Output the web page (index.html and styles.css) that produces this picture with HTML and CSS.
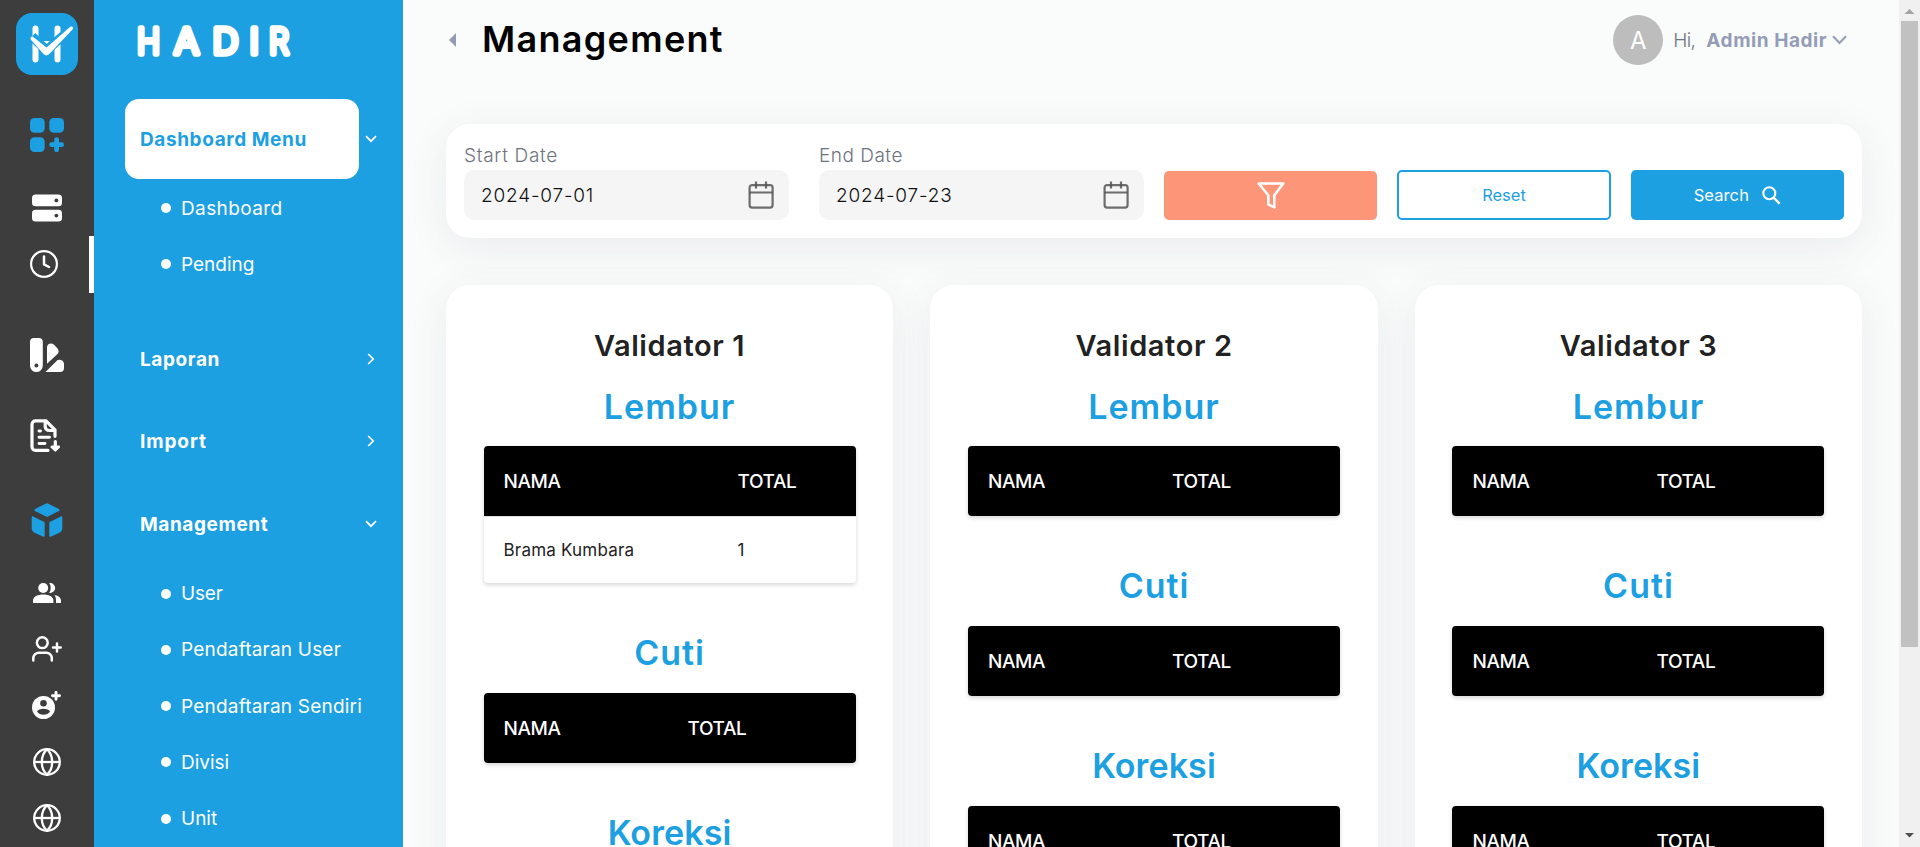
FILE: index.html
```html
<!DOCTYPE html>
<html lang="id">
<head>
<meta charset="utf-8">
<title>Hadir - Management</title>
<link rel="stylesheet" href="styles.css">
</head>
<body>
<svg class="defs" aria-hidden="true">
  <symbol id="i-down" viewBox="0 0 12 8"><path d="M1 1.2l5 5 5-5" fill="none" stroke="currentColor" stroke-width="1.7"/></symbol>
  <symbol id="i-right" viewBox="0 0 8 12"><path d="M1.2 1l5 5-5 5" fill="none" stroke="currentColor" stroke-width="1.7"/></symbol>
  <symbol id="i-globe" viewBox="0 0 28 28"><g fill="none" stroke="currentColor" stroke-width="2.3"><circle cx="14" cy="14" r="12.8"/><path d="M1.2 14h25.600"/><path d="M14 1.200c-3.800 3.600-5.200 8-5.200 12.800s1.400 9.200 5.200 12.800c3.800-3.600 5.200-8 5.200-12.800S17.800 4.800 14 1.200z"/></g></symbol>
  <symbol id="i-cal" viewBox="0 0 26 28"><g fill="none" stroke="#555" stroke-opacity=".85" stroke-width="2.2"><rect x="1.600" y="4.100" width="23" height="22.500" rx="2.500"/><path d="M1.600 11.500h23M8 .5v7M18 .5v7"/></g></symbol>
</svg>
<div class="app">
  <nav class="rail">
    <div class="rail-logo">
      <svg width="62" height="62" viewBox="0 0 62 62"><rect width="62" height="62" rx="16" fill="#1ca0e2"/>
        <g stroke="#fff" stroke-width="6" stroke-linecap="round"><path d="M19.500 15.500v31M41.500 15.500v31"/></g>
        <path d="M24 30h13" stroke="#fff" stroke-width="4"/>
        <path d="M16 23.500l14.500 13.800L55 16" fill="none" stroke="#1ca0e2" stroke-width="9.500"/>
        <path d="M14.700 26.600c-.8-2.200.9-4 2.900-2.400L30.500 34.500 54 14c2.300-1.500 4 .6 2.500 2.600L33.300 41c-2 2-4 1.900-5.800 0z" fill="#fff"/>
      </svg>
    </div>
    <div class="rail-item tall">
      <svg width="34" height="34" viewBox="0 0 34 34" fill="#1ca0e2"><rect width="14.700" height="14.700" rx="4.500"/><rect x="19.300" width="14.700" height="14.700" rx="4.500"/><rect y="19.300" width="14.700" height="14.700" rx="4.500"/><path d="M26.600 21.700v10M21.600 26.700h10" stroke="#1ca0e2" stroke-width="4.800" stroke-linecap="round"/></svg>
    </div>
    <div class="rail-item">
      <svg width="30" height="28" viewBox="0 0 30 28"><rect y=".5" width="30" height="11.700" rx="3.500" fill="#fff"/><rect y="15.800" width="30" height="11.700" rx="3.500" fill="#fff"/><circle cx="24.400" cy="6.400" r="1.900" fill="#3d3d3d"/><circle cx="24.400" cy="21.600" r="1.900" fill="#3d3d3d"/></svg>
    </div>
    <div class="rail-item current">
      <svg width="28" height="28" viewBox="0 0 28 28" fill="none" stroke="#fff"><circle cx="14" cy="14" r="12.900" stroke-width="2.200"/><path d="M14 6.500v7.800l5 2.700" stroke-width="2.500" stroke-linecap="round" stroke-linejoin="round"/></svg>
    </div>
    <div class="rail-item swatch">
      <svg width="34" height="34" viewBox="0 0 34 34" fill="#fff"><path fill-rule="evenodd" d="M4 0h4.800a4 4 0 0 1 4 4v23.600a6.400 6.400 0 0 1-12.800 0V4a4 4 0 0 1 4-4zm2.400 25.600a2 2 0 1 0 0 4 2 2 0 0 0 0-4z"/><path d="M17 9.200c0-3.400 4.200-5 6.800-2.600l3.300 3.300c2 2 2 4.300.4 6L17 25.700z"/><path d="M15.500 34L27.300 22.200c1.200-1.200 6.700-.8 6.700 4V30a4 4 0 0 1-4 4z"/></svg>
    </div>
    <div class="rail-item doc">
      <svg width="30" height="33" viewBox="0 0 30 33" fill="none" stroke="#fff" stroke-width="3.200"><path d="M18 31.300H5.500a3.500 3.500 0 0 1-3.500-3.500V5.300a3.500 3.500 0 0 1 3.500-3.500H16l9 9v6.500M15.200 2v5.500a4 4 0 0 0 4 4H25" stroke-linecap="round"/><path d="M9 12h1.500M9 18.300h10.500M9 24.500h6" stroke-width="2.900" stroke-linecap="round"/><path d="M25.300 22.500v5" stroke-linecap="round"/><path d="M21.700 27.800h7.200l-3.600 3.600z" fill="#fff" stroke-width="2.400" stroke-linejoin="round"/></svg>
    </div>
    <div class="rail-item cube">
      <svg width="32" height="34" viewBox="0 0 32 34" fill="#1ca0e2" stroke="#1ca0e2" stroke-width="2" stroke-linejoin="round"><path d="M16 1.200L27.500 7 16 12.800 4.500 7z"/><path d="M1.700 14.300l11 5.500v13L4 28.900c-1.800-.9-2.300-1.700-2.300-3.400z"/><path d="M30.300 14.300l-11 5.500v13l8.700-3.900c1.800-.9 2.300-1.700 2.300-3.400z"/></svg>
    </div>
    <div class="rail-item">
      <svg width="28" height="20" viewBox="0 0 28 20" fill="#fff"><circle cx="10.200" cy="5" r="5"/><path d="M0 20v-2.500c0-4 5-6 10.200-6s10.200 2 10.200 6V20z"/><path d="M16.200.1a5 5 0 1 1 0 9.800c2-2.900 2-6.900 0-9.800zM21.500 12c4.300.9 6.500 2.900 6.500 5.500V20h-5v-2.500c0-2.300-.4-4-1.500-5.500z"/></svg>
    </div>
    <div class="rail-item">
      <svg width="30" height="26" viewBox="0 0 30 26" fill="none" stroke="#fff" stroke-width="2.500" stroke-linecap="round"><circle cx="10.300" cy="6.700" r="5.400"/><path d="M1.300 24.600v-2.300a5.500 5.500 0 0 1 5.500-5.500h7.500a5.500 5.500 0 0 1 5.500 5.500v2.300M25 7.500v8M21 11.500h7.700"/></svg>
    </div>
    <div class="rail-item">
      <svg width="30" height="28" viewBox="0 0 30 28"><circle cx="11.500" cy="16.500" r="11.500" fill="#fff"/><circle cx="11.500" cy="12.300" r="3.300" fill="#3d3d3d"/><path d="M5 20.500c1-1.700 3.500-2.700 6.500-2.700s5.500 1 6.500 2.700c-1.500 2.200-3.800 3.300-6.500 3.300S6.500 22.700 5 20.500z" fill="#3d3d3d"/><path d="M24 1.300v7M20.500 4.800h7" stroke="#fff" stroke-width="2.900" stroke-linecap="round"/></svg>
    </div>
    <div class="rail-item"><svg width="28" height="28"><use href="#i-globe"/></svg></div>
    <div class="rail-item"><svg width="28" height="28"><use href="#i-globe"/></svg></div>
  </nav>

  <aside class="sidebar">
    <div class="brand">
      <svg width="160" height="40" viewBox="0 0 160 40">
        <text x="0" y="33" textLength="23" lengthAdjust="spacingAndGlyphs">H</text>
        <text x="37" y="33" textLength="25" lengthAdjust="spacingAndGlyphs">A</text>
        <text x="75.500" y="33" textLength="26" lengthAdjust="spacingAndGlyphs">D</text>
        <text x="112.500" y="33">I</text>
        <text x="132" y="33" textLength="20" lengthAdjust="spacingAndGlyphs">R</text>
      </svg>
    </div>
    <div class="group open"><span class="pill">Dashboard Menu</span><svg class="down"><use href="#i-down"/></svg></div>
    <ul class="sub">
      <li class="w2">Dashboard</li>
      <li>Pending</li>
    </ul>
    <div class="group first"><span>Laporan</span><svg class="right"><use href="#i-right"/></svg></div>
    <div class="group"><span class="import">Import</span><svg class="right"><use href="#i-right"/></svg></div>
    <div class="group last"><span>Management</span><svg class="down"><use href="#i-down"/></svg></div>
    <ul class="sub">
      <li class="tight">User</li>
      <li class="w1">Pendaftaran User</li>
      <li class="w1">Pendaftaran Sendiri</li>
      <li>Divisi</li>
      <li>Unit</li>
    </ul>
  </aside>

  <main class="main">
    <header class="header">
      <svg class="back" width="7" height="14" viewBox="0 0 7 14"><path d="M0 7l7-7v14z" fill="#949cb6"/></svg>
      <h1>Management</h1>
      <div class="user">
        <span class="avatar">A</span>
        <span class="hi">Hi,</span>
        <strong>Admin Hadir</strong>
        <svg width="15" height="10" viewBox="0 0 15 10"><path d="M1 1.200l6.500 6.800L14 1.200" fill="none" stroke="#949cb6" stroke-width="2"/></svg>
      </div>
    </header>

    <section class="filter">
      <div class="field"><label>Start Date</label><div class="input">2024-07-01<svg width="26" height="28"><use href="#i-cal"/></svg></div></div>
      <div class="field"><label class="end">End Date</label><div class="input">2024-07-23<svg width="26" height="28"><use href="#i-cal"/></svg></div></div>
      <div class="actions">
        <button class="btn funnel"><svg width="28" height="27" viewBox="0 0 28 27"><path d="M1.700 1.500h24.600l-9 11.700v12.300l-6-3.200v-9.100z" fill="none" stroke="#fff" stroke-width="2.500" stroke-linejoin="round"/></svg></button>
        <button class="btn reset">Reset</button>
        <button class="btn search">Search<svg width="19" height="19" viewBox="0 0 19 19" fill="none" stroke="#fff"><circle cx="7.300" cy="7.300" r="6" stroke-width="2.100"/><path d="M11.600 11.600l6 6" stroke-width="2.500"/></svg></button>
      </div>
    </section>

    <section class="cards">
      <article class="card">
        <h2>Validator 1</h2>
        <h3>Lembur</h3>
        <div class="table wide">
          <div class="thead"><span>NAMA</span><span>TOTAL</span></div>
          <div class="row"><span>Brama Kumbara</span><span>1</span></div>
        </div>
        <h3>Cuti</h3>
        <div class="table"><div class="thead"><span>NAMA</span><span>TOTAL</span></div></div>
        <h3 class="koreksi">Koreksi</h3>
        <div class="table"><div class="thead"><span>NAMA</span><span>TOTAL</span></div></div>
      </article>
      <article class="card">
        <h2>Validator 2</h2>
        <h3>Lembur</h3>
        <div class="table"><div class="thead"><span>NAMA</span><span>TOTAL</span></div></div>
        <h3>Cuti</h3>
        <div class="table"><div class="thead"><span>NAMA</span><span>TOTAL</span></div></div>
        <h3 class="koreksi">Koreksi</h3>
        <div class="table"><div class="thead"><span>NAMA</span><span>TOTAL</span></div></div>
      </article>
      <article class="card">
        <h2>Validator 3</h2>
        <h3>Lembur</h3>
        <div class="table"><div class="thead"><span>NAMA</span><span>TOTAL</span></div></div>
        <h3>Cuti</h3>
        <div class="table"><div class="thead"><span>NAMA</span><span>TOTAL</span></div></div>
        <h3 class="koreksi">Koreksi</h3>
        <div class="table"><div class="thead"><span>NAMA</span><span>TOTAL</span></div></div>
      </article>
    </section>
  </main>

  <div class="scroll">
    <svg width="21" height="21" viewBox="0 0 21 21"><path d="M5.500 14l5-5 5 5z" fill="#a3a3a3"/></svg>
    <div class="thumb"></div>
    <svg class="bottom" width="21" height="21" viewBox="0 0 21 21"><path d="M6 7l4.500 4.500L15 7z" fill="#505050"/></svg>
  </div>
</div>
</body>
</html>
```
FILE: styles.css
```css
* { box-sizing: border-box; }
body { margin: 0; height: 847px; overflow: hidden; font-family: Inter, "Liberation Sans", sans-serif; background: #fafcfb; }
h1, h2, h3, ul { margin: 0; padding: 0; }
svg { display: block; flex: none; }
.defs { display: none; }
.app { display: flex; height: 847px; overflow: hidden; }

.rail { width: 94px; flex: none; background: #3d3d3d; color: #fff; display: flex; flex-direction: column; }
.rail-logo { height: 90px; padding: 13px 0 0 16px; flex: none; }
.rail-item { height: 56.25px; flex: none; display: flex; align-items: center; justify-content: center; }
.rail-item.tall { height: 90px; }
.rail-item.current { height: 57px; padding: 0 1px 1px 0; border-right: 5px solid #fff; }
.rail-item.swatch { height: 80px; margin-top: 22px; }
.rail-item.doc { height: 81px; padding-right: 4px; }
.rail-item.cube { height: 88.500px; padding-bottom: 1px; }

.sidebar { width: 309px; flex: none; background: #1ca0e2; color: #fff; }
.brand { height: 99px; padding: 21px 0 0 43px; }
.brand text { font: 300 36px Inter, sans-serif; fill: #fff; stroke: #fff; stroke-width: 5.500px; stroke-linejoin: round; stroke-linecap: round; }
.group { height: 82px; padding: 0 26px 0 46px; display: flex; align-items: center; justify-content: space-between; font-size: 19px; font-weight: 700; letter-spacing: .6px; }
.group.first { margin-top: 26px; }
.group.last { height: 83px; }
.group.open { height: 80px; padding-left: 31px; margin-bottom: 1px; }
.import { letter-spacing: .9px; }
.pill { width: 234px; height: 80px; padding-left: 15px; border-radius: 14px; background: #fff; color: #1ca0e2; display: flex; align-items: center; }
.down { width: 12px; height: 8px; }
.right { width: 8px; height: 12px; margin: 0 2px 1px 0; }
.sub { list-style: none; }
.sub li { height: 56.25px; padding-left: 67px; display: flex; align-items: center; gap: 10px; font-size: 19px; }
.sub li::before { content: ""; width: 10px; height: 10px; border-radius: 50%; background: #fff; }
.sub .w1 { letter-spacing: .2px; }
.sub .w2 { letter-spacing: .4px; }
.sub .tight { letter-spacing: -.2px; }

.main { flex: 1; padding: 0 37px 0 43px; }
.header { height: 124px; padding: 5px 15px 0 3px; display: flex; align-items: flex-start; }
.back { margin-top: 28px; }
.header h1 { margin-left: 26px; font-size: 36px; line-height: 68px; font-weight: 600; letter-spacing: 1.3px; color: #000; }
.user { margin-left: auto; height: 70px; display: flex; align-items: center; font-size: 19px; }
.avatar { width: 50px; height: 50px; border-radius: 50%; background: #bdbdbd; color: #fff; font-size: 24px; display: flex; align-items: center; justify-content: center; }
.hi { margin-left: 10px; width: 33px; letter-spacing: -.7px; font-weight: 300; color: #6d7480; }
.user strong { color: #949cb6; letter-spacing: .55px; margin-right: 5px; }

.filter { height: 114px; padding: 18px 18px 18px; border-radius: 24px; background: #fff; box-shadow: 0 9px 40px rgba(50, 65, 95, .09); display: flex; align-items: flex-end; }
.field { width: 325px; margin-right: 30px; flex: none; }
.field + .field { margin-right: 20px; }
.field label { display: block; height: 28px; line-height: 28px; font-size: 19px; font-weight: 300; letter-spacing: .7px; color: #6d7480; }
.field .end { letter-spacing: .5px; }
.input { height: 50px; padding: 0 15px 0 17px; border-radius: 10px; background: #f5f5f5; display: flex; align-items: center; justify-content: space-between; font-size: 19px; font-weight: 300; letter-spacing: .8px; color: #111; }
.actions { flex: 1; display: grid; grid-template-columns: repeat(3, 1fr); gap: 20px; align-items: end; }
.btn { height: 50px; border: 0; border-radius: 5px; padding: 0; display: flex; align-items: center; justify-content: center; font: 400 16.500px Inter, sans-serif; }
.funnel { background: #fd9679; height: 49px; }
.reset { background: #fff; border: 2px solid #1ca0e2; color: #1ca0e2; }
.search { background: #1ca0e2; color: #fff; gap: 13px; letter-spacing: .1px; }

.cards { margin-top: 47px; display: grid; grid-template-columns: repeat(3, 1fr); gap: 37.400px; }
.card { height: 760px; padding: 38px 37.500px 0 37.550px; border-radius: 24px; background: #fff; box-shadow: 0 9px 40px rgba(50, 65, 95, .09); text-align: center; }
.card h2 { height: 46px; font-size: 29px; line-height: 46px; font-weight: 600; letter-spacing: .6px; color: #222; }
.card h3 { height: 110px; padding-top: 47px; font-size: 34px; line-height: 46px; font-weight: 600; letter-spacing: 1px; color: #1ca0e2; }
.card h2 + h3 { height: 77px; padding-top: 15px; }
.card .koreksi { letter-spacing: .1px; }
.table { border-radius: 4px; overflow: hidden; text-align: left; box-shadow: 0 2px 4px rgba(0, 0, 0, .16); }
.thead, .row { display: grid; grid-template-columns: 184px 1fr; padding: 0 20px; align-items: center; }
.wide .thead, .wide .row { grid-template-columns: 234px 1fr; }
.thead { height: 70px; background: #000; color: #fff; font-size: 19px; font-weight: 500; letter-spacing: -.4px; }
.row { height: 67.400px; border-top: 1px solid #e0e0e0; font-size: 17px; letter-spacing: .2px; color: #222; }

.scroll { width: 21px; flex: none; background: #f0f0f0; display: flex; flex-direction: column; }
.thumb { height: 626px; margin: 0 2px; background: #c1c1c1; }
.scroll .bottom { margin-top: auto; }
```
